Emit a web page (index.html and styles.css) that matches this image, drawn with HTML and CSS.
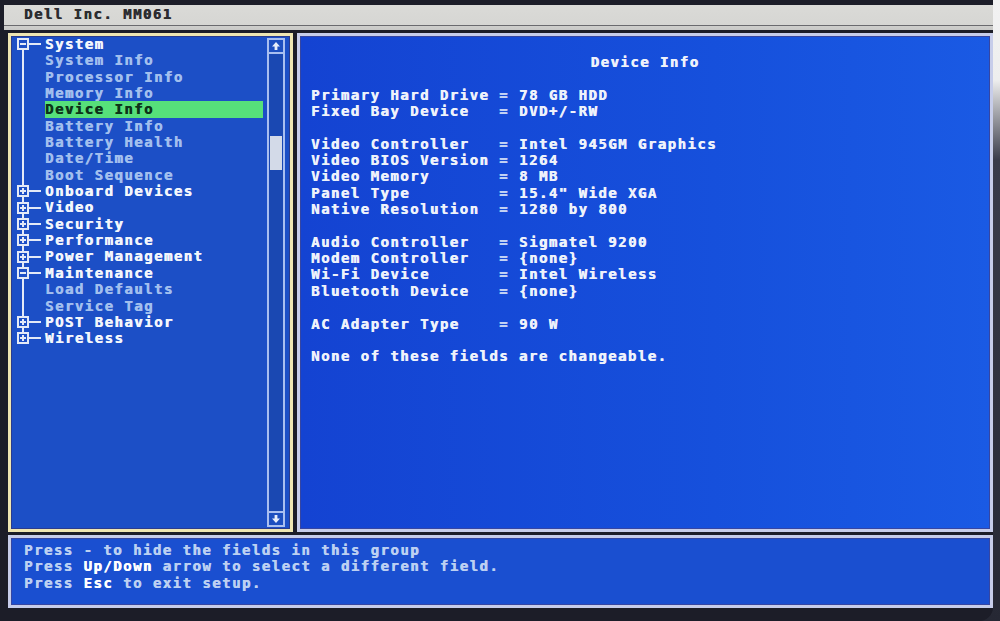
FILE: index.html
```html
<!DOCTYPE html>
<html lang="en">
<head>
  <meta charset="UTF-8">
  <meta name="viewport" content="width=device-width, initial-scale=1.0">
  <title>Dell Setup - Device Info</title>
  <link rel="stylesheet" href="styles.css">
</head>
<body>
  <div class="screen">
    <div class="titlebar">Dell Inc. MM061</div>

    <div class="panels">
      <div class="menu-panel">
        <ul class="tree">
          <li class="group first"><span class="box"></span><span class="link"></span><span class="label">System</span></li>
          <li class="item"><span class="label">System Info</span></li>
          <li class="item"><span class="label">Processor Info</span></li>
          <li class="item"><span class="label">Memory Info</span></li>
          <li class="item active"><span class="label">Device Info</span></li>
          <li class="item"><span class="label">Battery Info</span></li>
          <li class="item"><span class="label">Battery Health</span></li>
          <li class="item"><span class="label">Date/Time</span></li>
          <li class="item"><span class="label">Boot Sequence</span></li>
          <li class="group"><span class="box plus"></span><span class="link"></span><span class="label">Onboard Devices</span></li>
          <li class="group"><span class="box plus"></span><span class="link"></span><span class="label">Video</span></li>
          <li class="group"><span class="box plus"></span><span class="link"></span><span class="label">Security</span></li>
          <li class="group"><span class="box plus"></span><span class="link"></span><span class="label">Performance</span></li>
          <li class="group"><span class="box plus"></span><span class="link"></span><span class="label">Power Management</span></li>
          <li class="group"><span class="box"></span><span class="link"></span><span class="label">Maintenance</span></li>
          <li class="item"><span class="label">Load Defaults</span></li>
          <li class="item"><span class="label">Service Tag</span></li>
          <li class="group"><span class="box plus"></span><span class="link"></span><span class="label">POST Behavior</span></li>
          <li class="group last"><span class="box plus"></span><span class="link"></span><span class="label">Wireless</span></li>
        </ul>

        <div class="scrollbar">
          <div class="arrow up">
            <svg width="10" height="10" viewBox="0 0 10 10"><path d="M5 1 L1 5.5 H3.6 V9 H6.4 V5.5 H9 Z"/></svg>
          </div>
          <div class="track"><div class="thumb"></div></div>
          <div class="arrow down">
            <svg width="10" height="10" viewBox="0 0 10 10"><path d="M5 9 L1 4.5 H3.6 V1 H6.4 V4.5 H9 Z"/></svg>
          </div>
        </div>
      </div>

      <div class="info-panel">
        <div class="info-title">Device Info</div>

        <div class="fields">
          <span>Primary Hard Drive</span><span class="eq">=</span><span>78 GB HDD</span>
          <span>Fixed Bay Device</span><span class="eq">=</span><span>DVD+/-RW</span>
        </div>

        <div class="fields">
          <span>Video Controller</span><span class="eq">=</span><span>Intel 945GM Graphics</span>
          <span>Video BIOS Version</span><span class="eq">=</span><span>1264</span>
          <span>Video Memory</span><span class="eq">=</span><span>8 MB</span>
          <span>Panel Type</span><span class="eq">=</span><span>15.4" Wide XGA</span>
          <span>Native Resolution</span><span class="eq">=</span><span>1280 by 800</span>
        </div>

        <div class="fields">
          <span>Audio Controller</span><span class="eq">=</span><span>Sigmatel 9200</span>
          <span>Modem Controller</span><span class="eq">=</span><span>{none}</span>
          <span>Wi-Fi Device</span><span class="eq">=</span><span>Intel Wireless</span>
          <span>Bluetooth Device</span><span class="eq">=</span><span>{none}</span>
        </div>

        <div class="fields">
          <span>AC Adapter Type</span><span class="eq">=</span><span>90 W</span>
        </div>

        <p class="note">None of these fields are changeable.</p>
      </div>
    </div>

    <div class="help-panel">
      <div>Press - to hide the fields in this group</div>
      <div>Press <b>Up/Down</b> arrow to select a different field.</div>
      <div>Press <b>Esc</b> to exit setup.</div>
    </div>
  </div>
</body>
</html>
```

FILE: styles.css
```css
html, body {
  margin: 0;
  padding: 0;
  height: 100%;
}

body {
  /* bezel: light at the top right, dark below */
  background: linear-gradient(to bottom, #f2f2f2 0, #eeeeee 80px, #3a3c4a 160px, #262834 100%);
  font-family: "DejaVu Sans Mono", "Liberation Mono", monospace;
  font-weight: bold;
  font-size: 14px;
  letter-spacing: 1.47px;
  overflow: hidden;
}

.screen {
  width: 993px;
  height: 621px;
  box-sizing: border-box;
  padding: 5px 0 0 4px;
  background: #1c1d28;
  border-radius: 0 0 14px 0;
}

/* heavier strokes, like the setup screen's bitmap font */
.titlebar,
.tree,
.info-panel,
.help-panel {
  text-shadow: 0.6px 0 0 currentColor;
}

.titlebar {
  height: 25px;
  margin-bottom: 3px;
  padding-left: 20px;
  line-height: 19px;
  color: #2c2c30;
  background: linear-gradient(to bottom, #dadad7 0, #d6d6d3 20px, #6a6a6e 20px, #6a6a6e 21px, #cfcfcc 21px, #c8c8c6 25px);
}

.panels {
  display: flex;
  gap: 4px;
  height: 499px;
  margin-left: 4px;
}

/* ---------- left menu ---------- */

.menu-panel {
  width: 285px;
  box-sizing: border-box;
  display: flex;
  border: 3px solid #efe6b2;
  box-shadow: inset 0 0 0 1px #2b3c8e;
  background: #1c4fc6;
}

.tree {
  flex: 1;
  list-style: none;
  margin: 0 4px 0 0;
  padding: 0;
}

.tree li {
  display: flex;
  align-items: center;
  height: 16.35px;
  line-height: 16.35px;
  white-space: nowrap;
  background: linear-gradient(#e4eaf7, #e4eaf7) 11px 0 / 2px 100% no-repeat;
}

.tree li.first {
  background-position: 11px 100%;
  background-size: 2px 50%;
}

.tree li.last {
  background-position: 11px 0;
  background-size: 2px 50%;
}

.tree .item {
  padding-left: 34px;
  color: #a2bfee;
}

.tree .group {
  color: #f3f6fc;
}

.tree .label {
  flex: 1;
  padding-right: 2px;
}

.tree .active .label {
  background: #56e07a;
  color: #0d3419;
}

.box {
  position: relative;
  width: 12px;
  height: 12px;
  box-sizing: border-box;
  margin-left: 6px;
  border: 2px solid #e4eaf7;
  background: #1c4fc6;
  flex-shrink: 0;
}

.box::before {
  content: "";
  position: absolute;
  left: 1px;
  right: 1px;
  top: 3px;
  height: 2px;
  background: #e4eaf7;
}

.box.plus::after {
  content: "";
  position: absolute;
  top: 1px;
  bottom: 1px;
  left: 3px;
  width: 2px;
  background: #e4eaf7;
}

.link {
  width: 12px;
  height: 2px;
  margin-right: 4px;
  background: #e4eaf7;
  flex-shrink: 0;
}

.scrollbar {
  width: 18px;
  box-sizing: border-box;
  margin: 2px 5px 2px 0;
  display: flex;
  flex-direction: column;
  border-left: 2px solid #a9bff0;
  border-right: 2px solid #a9bff0;
  background: #1a48b2;
}

.arrow {
  height: 12px;
  display: flex;
  align-items: center;
  justify-content: center;
  border-top: 2px solid #a9bff0;
  border-bottom: 2px solid #a9bff0;
  background: #1d4fc0;
}

.arrow svg {
  fill: #e8eef9;
}

.track {
  flex: 1;
}

.thumb {
  height: 34px;
  margin: 82px 1px 0;
  background: #d3dae8;
}

/* ---------- right info ---------- */

.info-panel {
  flex: 1;
  box-sizing: border-box;
  padding: 18px 0 0 11px;
  border: 3px solid #c7cdea;
  box-shadow: inset 0 0 0 1px #3646a2;
  background: linear-gradient(to right, #1443d2, #1650dc 60%, #1a5ae4);
  color: #eef2fb;
  line-height: 16.35px;
}

.info-title {
  text-align: center;
  padding-right: 11px;
  margin-bottom: 16.35px;
}

.fields {
  display: grid;
  grid-template-columns: 188px 20px auto;
  justify-content: start;
  margin-bottom: 16.35px;
  white-space: pre;
}

.fields .eq {
  color: #c4d3f4;
}

.note {
  margin: 0;
}

/* ---------- help bar ---------- */

.help-panel {
  height: 73px;
  box-sizing: border-box;
  margin: 3px 0 0 4px;
  padding: 4px 0 0 13px;
  border: 3px solid #c7cdea;
  box-shadow: inset 0 0 0 1px #3646a2;
  background: #1a4fd0;
  color: #bcd0f2;
  line-height: 16.35px;
}

.help-panel b {
  color: #ffffff;
}
```
